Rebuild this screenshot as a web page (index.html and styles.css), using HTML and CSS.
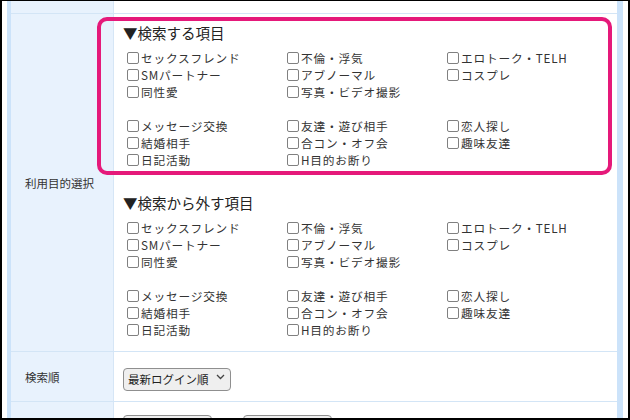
FILE: index.html
```html
<!DOCTYPE html>
<html lang="ja">
<head>
<meta charset="utf-8">
<title>検索条件</title>
<link rel="stylesheet" href="styles.css">
</head>
<body>
<div class="frame">
  <div class="sheet">
    <div class="row row-prev">
      <div class="th"></div>
      <div class="td"></div>
    </div>
    <div class="row row-purpose">
      <div class="th">利用目的選択</div>
      <div class="td">
        <div class="section">
          <h3 class="heading">▼検索する項目</h3>
          <div class="group">
            <label class="opt"><input type="checkbox"><span>セックスフレンド</span></label>
            <label class="opt"><input type="checkbox"><span>不倫・浮気</span></label>
            <label class="opt"><input type="checkbox"><span>エロトーク・TELH</span></label>
            <label class="opt"><input type="checkbox"><span>SMパートナー</span></label>
            <label class="opt"><input type="checkbox"><span>アブノーマル</span></label>
            <label class="opt"><input type="checkbox"><span>コスプレ</span></label>
            <label class="opt"><input type="checkbox"><span>同性愛</span></label>
            <label class="opt"><input type="checkbox"><span>写真・ビデオ撮影</span></label>
          </div>
          <div class="group">
            <label class="opt"><input type="checkbox"><span>メッセージ交換</span></label>
            <label class="opt"><input type="checkbox"><span>友達・遊び相手</span></label>
            <label class="opt"><input type="checkbox"><span>恋人探し</span></label>
            <label class="opt"><input type="checkbox"><span>結婚相手</span></label>
            <label class="opt"><input type="checkbox"><span>合コン・オフ会</span></label>
            <label class="opt"><input type="checkbox"><span>趣味友達</span></label>
            <label class="opt"><input type="checkbox"><span>日記活動</span></label>
            <label class="opt"><input type="checkbox"><span>H目的お断り</span></label>
          </div>
        </div>
        <div class="section">
          <h3 class="heading">▼検索から外す項目</h3>
          <div class="group">
            <label class="opt"><input type="checkbox"><span>セックスフレンド</span></label>
            <label class="opt"><input type="checkbox"><span>不倫・浮気</span></label>
            <label class="opt"><input type="checkbox"><span>エロトーク・TELH</span></label>
            <label class="opt"><input type="checkbox"><span>SMパートナー</span></label>
            <label class="opt"><input type="checkbox"><span>アブノーマル</span></label>
            <label class="opt"><input type="checkbox"><span>コスプレ</span></label>
            <label class="opt"><input type="checkbox"><span>同性愛</span></label>
            <label class="opt"><input type="checkbox"><span>写真・ビデオ撮影</span></label>
          </div>
          <div class="group">
            <label class="opt"><input type="checkbox"><span>メッセージ交換</span></label>
            <label class="opt"><input type="checkbox"><span>友達・遊び相手</span></label>
            <label class="opt"><input type="checkbox"><span>恋人探し</span></label>
            <label class="opt"><input type="checkbox"><span>結婚相手</span></label>
            <label class="opt"><input type="checkbox"><span>合コン・オフ会</span></label>
            <label class="opt"><input type="checkbox"><span>趣味友達</span></label>
            <label class="opt"><input type="checkbox"><span>日記活動</span></label>
            <label class="opt"><input type="checkbox"><span>H目的お断り</span></label>
          </div>
        </div>
      </div>
    </div>
    <div class="row row-order">
      <div class="th">検索順</div>
      <div class="td">
        <span class="select-wrap">
          <select class="select">
            <option>最新ログイン順</option>
            <option>新規登録順</option>
          </select>
          <svg class="chevron" width="9" height="6" viewBox="0 0 9 6"><polyline points="1,1 4.5,4.5 8,1" fill="none" stroke="#444" stroke-width="1.3"/></svg>
        </span>
      </div>
    </div>
    <div class="row row-buttons">
      <div class="th"></div>
      <div class="td">
        <button class="btn" type="button" aria-label="検索する"></button>
        <button class="btn" type="button" aria-label="リセット"></button>
      </div>
    </div>
  </div>
  <div class="highlight"></div>
</div>
</body>
</html>
```

FILE: styles.css
```css
html, body {
  margin: 0;
  padding: 0;
  height: 100%;
  overflow: hidden;
  background: #fff;
}

body {
  font-family: "Noto Sans CJK JP", "Noto Sans", sans-serif;
  color: #333;
}

.frame {
  position: relative;
  box-sizing: border-box;
  width: 630px;
  height: 420px;
  border: 2px solid #000;
  border-top-width: 1px;
  padding: 0 5px;
  overflow: hidden;
  background: #fff;
}

.sheet {
  border-left: 4px solid #cce3fa;
  border-right: 6px solid #cce3fa;
}

.row {
  display: grid;
  grid-template-columns: 103px 1fr;
  border-bottom: 1px solid #d3e5f6;
}

.th {
  display: flex;
  align-items: center;
  padding-left: 14px;
  background: #e8f2fd;
  border-right: 1px solid #d6e6f6;
  font-size: 11.5px;
  color: #333;
}

.row-prev {
  height: 12px;
}

.row-purpose .td {
  padding: 9px 0 13px 9px;
}

.section + .section {
  margin-top: 25px;
}

.heading {
  margin: 0 0 6px;
  font-size: 14.5px;
  line-height: 20px;
  font-weight: normal;
  color: #222;
}

.group {
  display: grid;
  grid-template-columns: repeat(3, 160px);
  grid-auto-rows: 17px;
}

.group + .group {
  margin-top: 17px;
}

.opt {
  display: flex;
  align-items: center;
  font-size: 11.7px;
  letter-spacing: 0.8px;
  line-height: 17px;
  white-space: nowrap;
  color: #333;
}

.opt input {
  appearance: none;
  -webkit-appearance: none;
  flex: none;
  box-sizing: border-box;
  width: 12px;
  height: 12px;
  margin: 0 2px 0 4px;
  border: 1px solid #808080;
  border-radius: 2px;
  background: #fff;
}

.row-order .td {
  display: flex;
  align-items: center;
  height: 49px;
  padding-left: 9px;
}

.select-wrap {
  position: relative;
  display: inline-block;
  height: 23px;
}

.select {
  appearance: none;
  -webkit-appearance: none;
  box-sizing: border-box;
  width: 108px;
  height: 23px;
  margin: 0;
  padding: 0 0 0 4px;
  border: 1px solid #8f8f8f;
  border-radius: 4px;
  background: #efefef;
  font-family: "Noto Sans CJK JP", sans-serif;
  font-size: 11.5px;
  color: #222;
}

.chevron {
  position: absolute;
  right: 6px;
  top: 9px;
  pointer-events: none;
}

.row-buttons .td {
  display: flex;
  gap: 31px;
  padding: 13px 0 0 9px;
}

.btn {
  box-sizing: border-box;
  width: 89px;
  height: 28px;
  border: 1px solid #8f8f8f;
  border-radius: 4px;
  background: #efefef;
  padding: 0;
}

.highlight {
  position: absolute;
  left: 95px;
  top: 16px;
  box-sizing: border-box;
  width: 515px;
  height: 158px;
  border: 4px solid #e5197a;
  border-radius: 10px;
  pointer-events: none;
}
```
